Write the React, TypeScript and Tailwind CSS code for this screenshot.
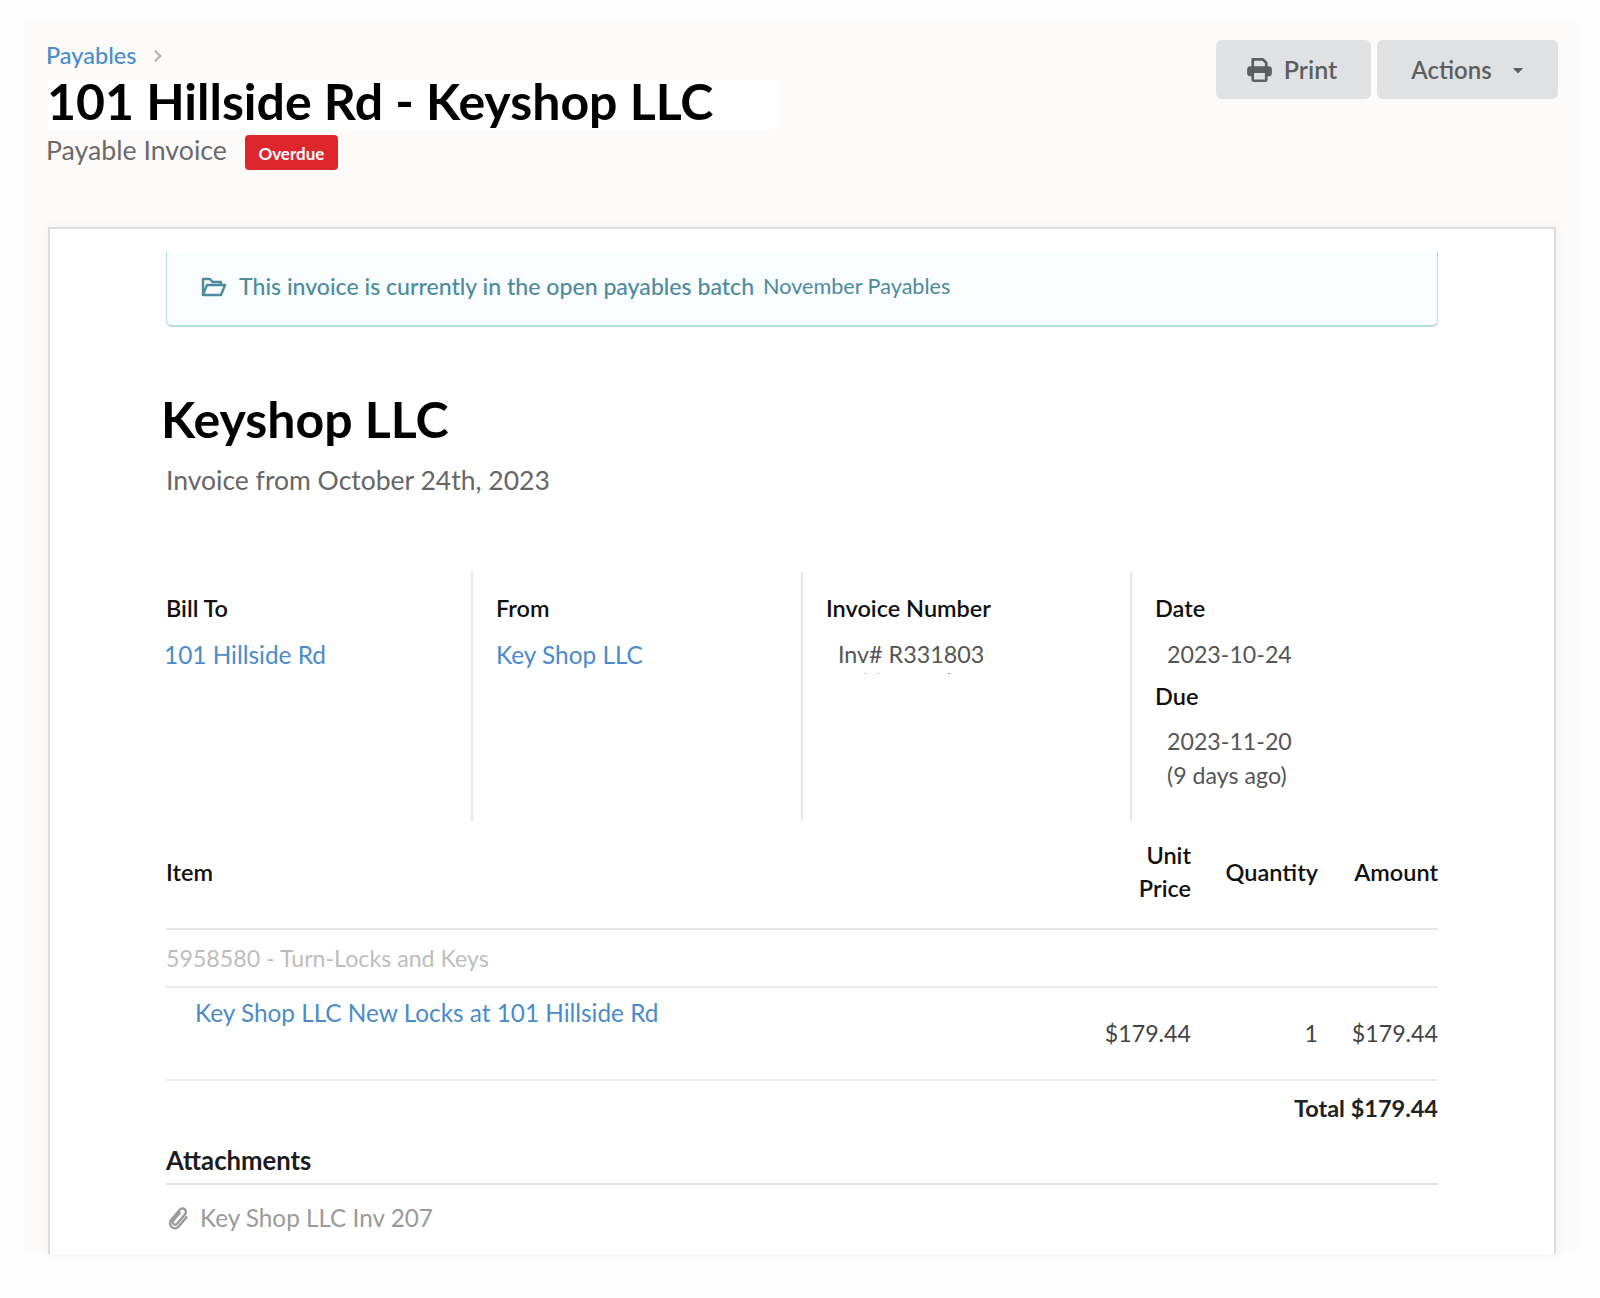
import React from 'react';
import { FaCaretDown, FaChevronRight } from 'react-icons/fa';

const LINK = 'text-[#4a8ccb]';

const InfoColumn: React.FC<{ first?: boolean; children: React.ReactNode }> = ({ first, children }) => (
  <div className={first ? 'pt-[21px]' : 'border-l-2 border-[#e6e6e6] pl-[23px] pt-[21px]'}>{children}</div>
);

const InfoLabel: React.FC<{ children: React.ReactNode }> = ({ children }) => (
  <div className="text-[23.5px] leading-[30px] font-semibold text-[#111]">{children}</div>
);

const PrintIcon = () => (
  <svg viewBox="0 0 24 24" className="h-[27px] w-[27px]" fill="none" stroke="currentColor" strokeWidth="2.4">
    <path d="M6 10V3h9l3 3v4" strokeLinejoin="round" />
    <rect x="1" y="9" width="22" height="9" rx="3" fill="currentColor" stroke="none" />
    <rect x="6" y="14" width="12" height="8" rx="1" fill="#e0e1e3" />
  </svg>
);

const FolderIcon = () => (
  <svg viewBox="0 0 26 22" className="h-[22px] w-[26px]" fill="none" stroke="currentColor" strokeWidth="2.4" strokeLinejoin="round">
    <path d="M2 19V3h7l2.5 3H20v3" />
    <path d="M2 19 6 9h18l-4 10z" />
  </svg>
);

const ClipIcon = () => (
  <svg viewBox="0 0 24 24" className="h-[26px] w-[24px]" fill="none" stroke="currentColor" strokeWidth="2.4" strokeLinecap="round">
    <g transform="rotate(40 12 12)">
      <path d="M10 7v10a2.5 2.5 0 0 0 5 0V4.5a3.5 3.5 0 0 0-7 0V18a5 5 0 0 0 10 0V6" />
    </g>
  </svg>
);

export default function App() {
  return (
    <div className="h-[1298px] overflow-hidden bg-[#fdfdfd] pt-[22px] pr-[22px] pl-[25px] font-['Lato','Liberation_Sans',sans-serif]">
      <div className="flex h-[1232px] flex-col bg-[#fcfbfa] pr-[20px] pl-[21px]">
        {/* Шапка */}
        <div className="flex h-[205px] shrink-0 justify-between">
          <div className="pt-[19px]">
            <div className="flex h-[30px] items-center gap-[15px]">
              <a className={`text-[23.5px] font-medium ${LINK}`}>Payables</a>
              <FaChevronRight className="h-[14px] w-[14px] text-[#b4b4b4]" />
            </div>
            <h1 className="mt-[9px] ml-[2px] h-[50px] w-[731px] bg-white text-[50px] leading-[42px] font-bold text-black">
              <span className="ml-[-1px]">101 Hillside Rd - Keyshop LLC</span>
            </h1>
            <div className="flex items-start gap-[18px]">
              <span className="text-[26.7px] leading-[40px] text-[#6a6a6a]">Payable Invoice</span>
              <span className="mt-[5px] flex h-[35px] w-[93px] items-center justify-center rounded-[4px] bg-[#dd272d] pt-[2px] text-[17px] font-bold text-white">
                Overdue
              </span>
            </div>
          </div>
          <div className="flex gap-[6px] pt-[18px]">
            <button className="flex h-[59px] w-[155px] items-center justify-center gap-[11px] rounded-[6px] bg-[#e0e1e3] pr-[4px] text-[25px] font-semibold text-[#5c5e61]">
              <PrintIcon />
              Print
            </button>
            <button className="flex h-[59px] w-[181px] items-center justify-center gap-[18px] rounded-[6px] bg-[#e0e1e3] pl-[2px] text-[24px] font-semibold text-[#5c5e61]">
              Actions
              <FaCaretDown className="h-[16px] w-[16px]" />
            </button>
          </div>
        </div>

        {/* Карточка счёта */}
        <div className="mr-[2px] ml-[2px] flex-1 border-x-2 border-t-2 border-[#dcdcdc] bg-white pr-[116px] pl-[116px] shadow-[0_0_14px_rgba(0,0,0,0.05)]">
          <div className="mt-[23px] flex h-[75px] items-center gap-[12px] rounded-b-[6px] border-x border-b-2 border-[#b5dde3] bg-[#f9fdfe] pb-[4px] pl-[34px] text-[#4d8b9c]">
            <FolderIcon />
            <span className="text-[23.1px] font-medium">This invoice is currently in the open payables batch</span>
            <span className="ml-[-3px] text-[21.6px]">November Payables</span>
          </div>

          <h2 className="mt-[62px] ml-[-5px] text-[50px] leading-[60px] font-bold text-black">Keyshop LLC</h2>
          <p className="mt-[11px] text-[26.5px] leading-[40px] text-[#666]">Invoice from October 24th, 2023</p>

          <div className="mt-[72px] grid h-[249px] grid-cols-[305px_330px_329px_1fr]">
            <InfoColumn first>
              <InfoLabel>Bill To</InfoLabel>
              <a className={`mt-[16px] ml-[-2px] block text-[24.4px] leading-[32px] ${LINK}`}>101 Hillside Rd</a>
            </InfoColumn>
            <InfoColumn>
              <InfoLabel>From</InfoLabel>
              <a className={`mt-[16px] block text-[24.4px] leading-[32px] ${LINK}`}>Key Shop LLC</a>
            </InfoColumn>
            <InfoColumn>
              <InfoLabel>Invoice Number</InfoLabel>
              <div className="mt-[15px] pl-[12px] text-[23.3px] leading-[32px] text-[#555]">Inv# R331803</div>
              <div className="mt-[3px] ml-[38px] flex h-px gap-[11px]">
                <span className="w-[2px] bg-[#c4c4c4]" />
                <span className="w-[2px] bg-[#c4c4c4]" />
                <span className="ml-[58px] w-[2px] bg-[#999]" />
              </div>
            </InfoColumn>
            <InfoColumn>
              <InfoLabel>Date</InfoLabel>
              <div className="mt-[15px] pl-[12px] text-[23.2px] leading-[32px] text-[#555]">2023-10-24</div>
              <div className="mt-[11px]">
                <InfoLabel>Due</InfoLabel>
              </div>
              <div className="mt-[13px] pl-[12px] text-[23.2px] leading-[34px] text-[#555]">
                2023-11-20
                <br />
                (9 days ago)
              </div>
            </InfoColumn>
          </div>

          {/* Позиции */}
          <div className="grid h-[109px] grid-cols-[1fr_100px_127px_120px] items-center border-b-2 border-[#e6e6e6] pb-[5px] text-[23.5px] leading-[33px] font-semibold text-[#111]">
            <div>Item</div>
            <div className="text-right">
              Unit
              <br />
              Price
            </div>
            <div className="text-right">Quantity</div>
            <div className="text-right">Amount</div>
          </div>
          <div className="flex h-[58px] items-center border-b-2 border-[#ececec] text-[23.2px] text-[#bdbdbd]">
            5958580 - Turn-Locks and Keys
          </div>
          <div className="grid h-[93px] grid-cols-[1fr_100px_127px_120px] border-b-2 border-[#ececec] text-[23.2px] text-[#444]">
            <a className={`pt-[9px] pl-[29px] text-[24.35px] leading-[32px] ${LINK}`}>
              Key Shop LLC New Locks at 101 Hillside Rd
            </a>
            <div className="pt-[29px] text-right leading-[32px] whitespace-nowrap">$179.44</div>
            <div className="pt-[29px] text-right leading-[32px]">1</div>
            <div className="pt-[29px] text-right leading-[32px]">$179.44</div>
          </div>
          <div className="pt-[11px] text-right text-[23.5px] leading-[32px] font-bold text-[#222]">Total $179.44</div>

          <div className="mt-[20px] border-b-2 border-[#e2e2e2] pb-[7px] text-[25.7px] leading-[32px] font-bold text-[#1c1c1c]">
            Attachments
          </div>
          <div className="mt-[17px] flex items-center gap-[10px] text-[24.3px] leading-[32px] text-[#9a9a9a]">
            <ClipIcon />
            Key Shop LLC Inv 207
          </div>
        </div>
      </div>
    </div>
  );
}
